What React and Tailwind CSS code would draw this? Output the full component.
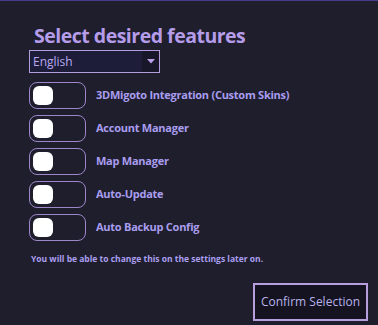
import React from "react";

const features = [
  "3DMigoto Integration (Custom Skins)",
  "Account Manager",
  "Map Manager",
  "Auto-Update",
  "Auto Backup Config",
];

function Toggle() {
  return (
    <div className="w-[57px] h-[27px] rounded-[8px] border border-[#9d86c9] flex items-center pl-[3px]">
      <div className="w-[20px] h-[19px] rounded-[6px] bg-white" />
    </div>
  );
}

export default function App() {
  return (
    <div
      className="w-[378px] h-[325px] bg-[#1f1e2d] border-t-[1px] border-[#4a3a8c] flex flex-col overflow-hidden"
      style={{ fontFamily: '"Open Sans", "Noto Sans", sans-serif' }}
    >
      <div className="pl-[34px] pt-[22px] text-[19.5px] leading-[26px] font-bold text-[#b59ce9] tracking-[-0.5px]">
        Select desired features
      </div>
      <div className="ml-[29px] mt-[1px] w-[131px] h-[23px] border border-[#b49ddf] bg-[#1d1d3a] flex items-stretch">
        <div className="flex-1 pl-[3px] flex items-center text-[12px] text-[#b8a8ee]">English</div>
        <div className="w-[17px] bg-[#171729] flex items-center justify-center">
          <svg width="8" height="5" viewBox="0 0 8 5">
            <path d="M0 0 L8 0 L4 4.5 Z" fill="#b89fe6" />
          </svg>
        </div>
      </div>
      <div className="mt-[9px] ml-[29px] flex flex-col gap-[6px]">
        {features.map((f) => (
          <div key={f} className="flex items-center gap-[10px]">
            <Toggle />
            <span className="text-[11px] font-bold text-[#a99def] tracking-[-0.25px]">{f}</span>
          </div>
        ))}
      </div>
      <div className="ml-[31px] mt-[12px] text-[8.5px] font-bold text-[#ab9ff0]">
        You will be able to change this on the settings later on.
      </div>
      <div className="flex justify-end pr-[10px] mt-[17px]">
        <div className="w-[115px] h-[38px] border-2 border-[#b69fdc] bg-[#14131f] flex items-center justify-center text-[12px] text-[#b9b2ec]">
          Confirm Selection
        </div>
      </div>
    </div>
  );
}
